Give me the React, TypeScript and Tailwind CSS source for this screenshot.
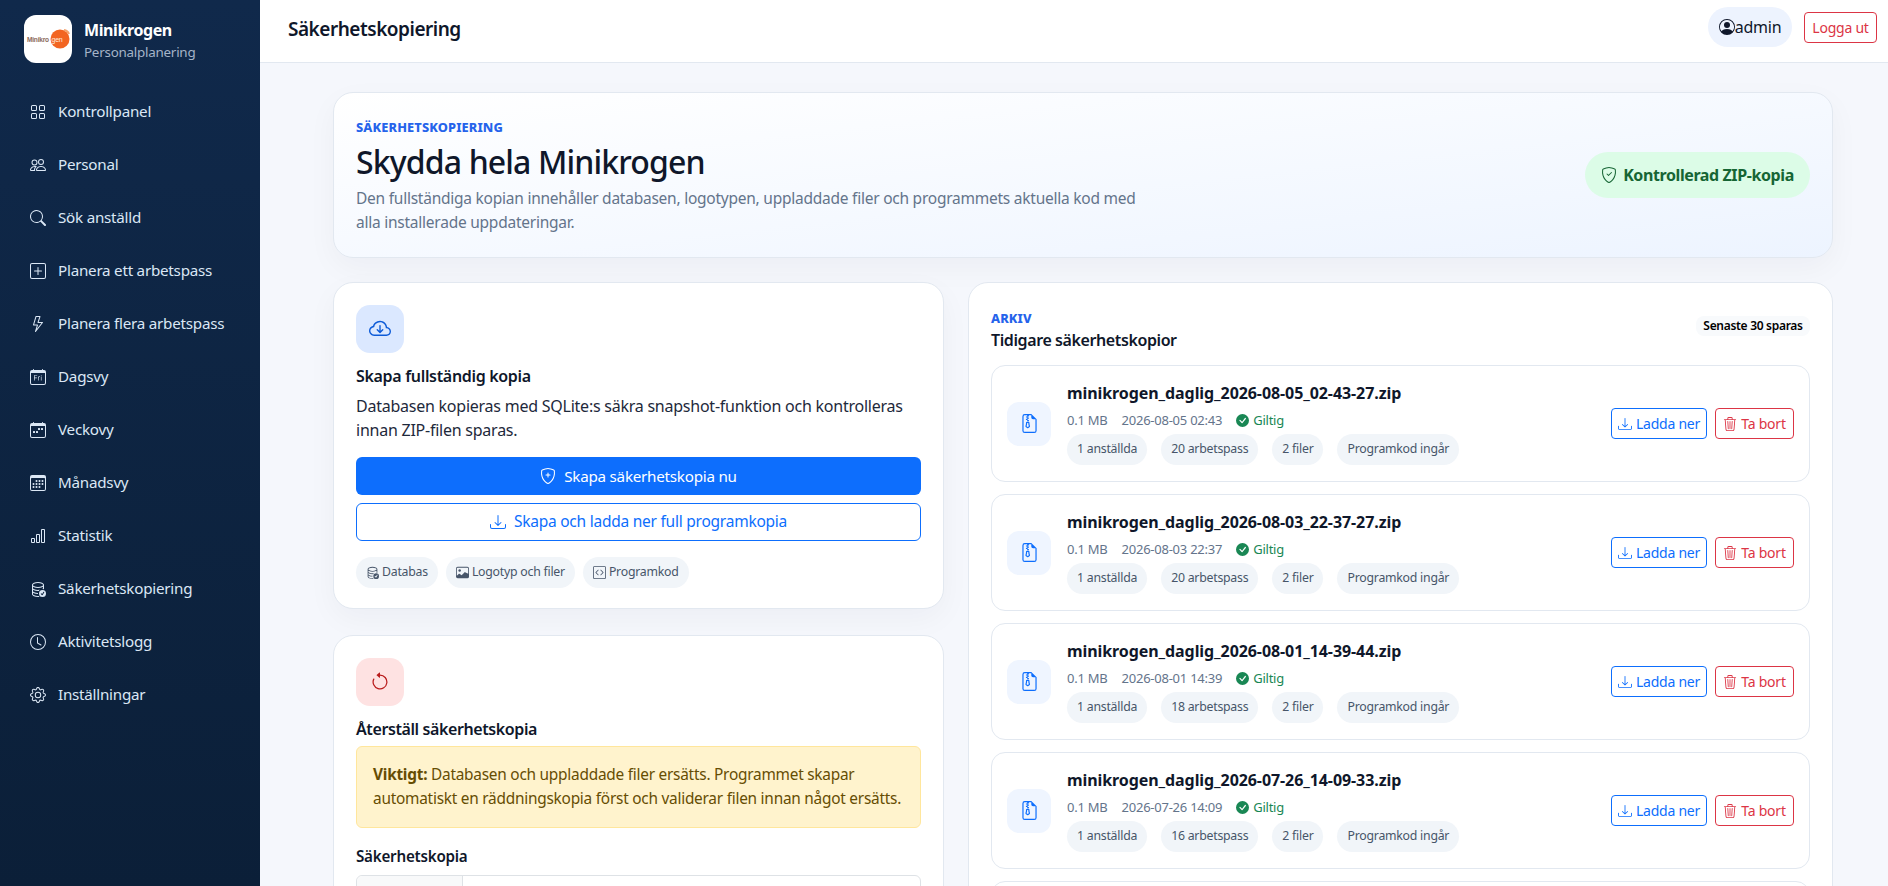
import React from "react";
import {
  BsGrid, BsPeople, BsSearch, BsPlusSquare, BsLightning, BsCalendarDay, BsCalendarWeek, BsCalendar3,
  BsBarChart, BsDatabaseCheck, BsClock, BsGear, BsPersonCircle, BsShieldCheck, BsCloudArrowDown,
  BsShieldPlus, BsDownload, BsImage, BsCodeSquare, BsArrowCounterclockwise, BsFileEarmarkZip,
  BsCheckCircleFill, BsTrash3,
} from "react-icons/bs";

const nav = [
  [BsGrid, "Kontrollpanel"], [BsPeople, "Personal"], [BsSearch, "Sök anställd"], [BsPlusSquare, "Planera ett arbetspass"],
  [BsLightning, "Planera flera arbetspass"], [BsCalendarDay, "Dagsvy"], [BsCalendarWeek, "Veckovy"], [BsCalendar3, "Månadsvy"],
  [BsBarChart, "Statistik"], [BsDatabaseCheck, "Säkerhetskopiering"], [BsClock, "Aktivitetslogg"], [BsGear, "Inställningar"],
] as const;

const backups = [
  ["minikrogen_daglig_2026-08-05_02-43-27.zip", "2026-08-05 02:43", "20"],
  ["minikrogen_daglig_2026-08-03_22-37-27.zip", "2026-08-03 22:37", "20"],
  ["minikrogen_daglig_2026-08-01_14-39-44.zip", "2026-08-01 14:39", "18"],
  ["minikrogen_daglig_2026-07-26_14-09-33.zip", "2026-07-26 14:09", "16"],
  ["minikrogen_daglig_2026-07-20_14-09-33.zip", "2026-07-20 14:09", "16"],
];

function Logo() {
  return (
    <div className="w-12 h-12 rounded-[12px] bg-white shrink-0">
      <svg viewBox="0 0 48 48" className="w-12 h-12">
        <circle cx="36" cy="24" r="9.5" fill="#f26522" />
        <text x="3" y="26.5" fontSize="6.6" fontWeight="700" fill="#8b6a5c" fontFamily="Liberation Sans">Minikro</text>
        <text x="27.5" y="27" fontSize="7" fontWeight="400" fill="#ffe9dc" fontFamily="Liberation Sans">gen</text>
        <path d="M40 15 a6 6 0 0 1 5 4" stroke="#f4a26c" strokeWidth="2" fill="none" />
      </svg>
    </div>
  );
}

function Pill({ children }: { children: React.ReactNode }) {
  return <span className="h-[31px] px-[10px] rounded-full bg-[#f1f5f9] text-[#475569] text-[12.3px] flex items-center gap-[3px]">{children}</span>;
}

function BackupRow({ name, date, shifts }: { name: string; date: string; shifts: string }) {
  return (
    <div className="h-[117px] shrink-0 rounded-[14px] border border-[#e2e8f0] bg-white flex items-center pl-[15px] pr-[15px]">
      <div className="w-11 h-11 rounded-[12px] bg-[#eff5ff] flex items-center justify-center text-[#0d6efd] shrink-0">
        <BsFileEarmarkZip size={19} />
      </div>
      <div className="ml-4 flex-1 min-w-0">
        <div className="text-[16px] leading-[20px] font-bold tracking-[-0.005em] text-[#0f172a] mb-[7px]">{name}</div>
        <div className="flex items-center text-[13px] leading-[20px] text-[#64748b] h-[21px] mb-[3px]">
          <span>0.1 MB</span>
          <span className="ml-[14px]">{date}</span>
          <span className="ml-[14px] flex items-center gap-1 text-[#198754]"><BsCheckCircleFill size={13} className="text-[#198754]" />Giltig</span>
        </div>
        <div className="flex gap-[14px]">
          <Pill>1 anställda</Pill>
          <Pill>{shifts} arbetspass</Pill>
          <Pill>2 filer</Pill>
          <Pill>Programkod ingår</Pill>
        </div>
      </div>
      <div className="flex gap-2 shrink-0">
        <button className="h-[31px] w-[96px] rounded-[4px] border border-[#0d6efd] text-[#0d6efd] text-[14px] flex items-center justify-center gap-1"><BsDownload size={14} />Ladda ner</button>
        <button className="h-[31px] w-[79px] rounded-[4px] border border-[#dc3545] text-[#dc3545] text-[14px] flex items-center justify-center gap-1"><BsTrash3 size={14} />Ta bort</button>
      </div>
    </div>
  );
}

export default function App() {
  return (
    <div className="flex h-screen overflow-hidden bg-[#f5f7fc] font-['Noto_Sans',sans-serif] tracking-[-0.015em]">
      <aside className="w-[260px] shrink-0 bg-gradient-to-b from-[#10294b] to-[#0b1f38] text-white">
        <div className="flex items-center gap-3 pl-6 h-[78px]">
          <Logo />
          <div className="pt-1">
            <div className="text-[16px] leading-[22px] font-bold tracking-[-0.025em]">Minikrogen</div>
            <div className="text-[13.4px] leading-[22px] text-[#a5b4c8]">Personalplanering</div>
          </div>
        </div>
        <nav className="mt-[7px]">
          {nav.map(([Icon, label]) => (
            <div key={label} className="h-[53px] flex items-center pl-[30px] gap-3 text-[#dbe7f5] text-[15.2px]">
              <Icon size={16} className="shrink-0" />
              <span>{label}</span>
            </div>
          ))}
        </nav>
      </aside>
      <div className="flex-1 min-w-0 flex flex-col">
        <header className="h-[63px] shrink-0 bg-white border-b border-[#e2e8f0] flex items-center justify-between pl-[28px] pr-[11px]">
          <div className="text-[19px] font-semibold tracking-[-0.025em] text-[#0f172a] -mt-[4px]">Säkerhetskopiering</div>
          <div className="flex items-center gap-3 -mt-[8px]">
            <div className="h-10 w-[84px] rounded-full bg-[#edf3fe] flex items-center justify-center text-[#0f172a] text-[16px]"><BsPersonCircle size={16} />admin</div>
            <button className="h-[31px] w-[73px] rounded-[4px] border border-[#dc3545] text-[#dc3545] text-[14px]">Logga ut</button>
          </div>
        </header>
        <main className="flex-1 min-h-0 overflow-hidden pl-[73px] pr-[55px] pt-[29px]">
          <section className="h-[166px] rounded-[20px] border border-[#e2e8f0] bg-gradient-to-br from-white to-[#edf4ff] shadow-[0_10px_30px_rgba(15,23,42,0.04)] flex items-center justify-between pl-[22px] pr-[22px]">
            <div>
              <div className="text-[12.8px] leading-[18px] font-extrabold uppercase tracking-[0.01em] text-[#2563eb] pt-px">Säkerhetskopiering</div>
              <h1 className="text-[32px] leading-[40px] font-medium tracking-[-0.027em] text-[#0f172a] mt-[6px]">Skydda hela Minikrogen</h1>
              <p className="text-[15.5px] leading-[24px] text-[#64748b] mt-[4px] w-[790px]">Den fullständiga kopian innehåller databasen, logotypen, uppladdade filer och programmets aktuella kod med alla installerade uppdateringar.</p>
            </div>
            <div className="h-[46px] w-[225px] rounded-full bg-[#dcfce7] text-[#166534] font-bold text-[16px] tracking-[-0.025em] flex items-center justify-center gap-[6px]"><BsShieldCheck size={16} />Kontrollerad ZIP-kopia</div>
          </section>
          <div className="grid grid-cols-[611px_865px] gap-6 mt-6 items-start">
            <div className="flex flex-col gap-[26px]">
              <section className="h-[327px] rounded-[20px] border border-[#e2e8f0] bg-white shadow-[0_10px_30px_rgba(15,23,42,0.04)] p-[22px]">
                <div className="w-12 h-12 rounded-[14px] bg-[#dbe8ff] text-[#0d5bd8] flex items-center justify-center"><BsCloudArrowDown size={22} /></div>
                <h2 className="text-[16px] leading-[24px] font-semibold text-[#0f172a] tracking-[-0.02em] mt-[11px]">Skapa fullständig kopia</h2>
                <p className="text-[16px] leading-[24px] text-[#1e293b] mt-[6px]">Databasen kopieras med SQLite:s säkra snapshot-funktion och kontrolleras innan ZIP-filen sparas.</p>
                <button className="mt-[15px] w-full h-[38px] rounded-[6px] bg-[#0d6efd] text-white text-[15.2px] flex items-center justify-center gap-2"><BsShieldPlus size={16} />Skapa säkerhetskopia nu</button>
                <button className="mt-2 w-full h-[38px] rounded-[6px] border border-[#0d6efd] text-[#0d6efd] text-[15.5px] flex items-center justify-center gap-2"><BsDownload size={16} />Skapa och ladda ner full programkopia</button>
                <div className="flex gap-2 mt-4">
                  <Pill><BsDatabaseCheck size={13} />Databas</Pill>
                  <Pill><BsImage size={13} />Logotyp och filer</Pill>
                  <Pill><BsCodeSquare size={13} />Programkod</Pill>
                </div>
              </section>
              <section className="rounded-[20px] border border-[#e2e8f0] bg-white p-[22px]">
                <div className="w-12 h-12 rounded-[14px] bg-[#fee2e2] text-[#b91c1c] flex items-center justify-center"><BsArrowCounterclockwise size={20} /></div>
                <h2 className="text-[16px] leading-[24px] font-semibold tracking-[-0.025em] text-[#0f172a] mt-[11px]">Återställ säkerhetskopia</h2>
                <div className="mt-[5px] h-[82px] rounded-[6px] border border-[#ffe69c] bg-[#fff3cd] text-[#664d03] text-[15.4px] leading-[24px] pl-4 pr-2 py-[16px]"><strong>Viktigt:</strong> Databasen och uppladdade filer ersätts. Programmet skapar<br />automatiskt en räddningskopia först och validerar filen innan något ersätts.</div>
                <label className="block mt-[16px] text-[15.2px] leading-[24px] font-semibold text-[#0f172a]">Säkerhetskopia</label>
                <div className="mt-[7px] h-[38px] rounded-[6px] border border-[#dee2e6] flex text-[15.2px] text-[#212529]">
                  <div className="w-[106px] bg-[#f8f9fa] border-r border-[#dee2e6] flex items-center justify-center rounded-l-[6px]">Välj fil</div>
                  <div className="flex-1 flex items-center px-3">Ingen fil har valts</div>
                </div>
              </section>
            </div>
            <section className="rounded-[20px] border border-[#e2e8f0] bg-white p-[22px] pt-[21px]">
              <div className="flex items-start justify-between h-[61px]">
                <div>
                  <div className="text-[12.8px] leading-[18px] font-extrabold uppercase tracking-[0.01em] text-[#2563eb] mt-[5px]">Arkiv</div>
                  <div className="text-[16px] leading-[24px] font-semibold tracking-[-0.025em] text-[#0f172a] mt-[1px]">Tidigare säkerhetskopior</div>
                </div>
                <div className="mt-[12px] h-5 w-[114px] rounded-[8px] bg-[#f8fafc] text-[12px] font-semibold tracking-[-0.025em] text-black flex items-center justify-center">Senaste 30 sparas</div>
              </div>
              <div className="flex flex-col gap-3">
                {backups.map(([n, d, s]) => <BackupRow key={n} name={n} date={d} shifts={s} />)}
              </div>
            </section>
          </div>
        </main>
      </div>
    </div>
  );
}
